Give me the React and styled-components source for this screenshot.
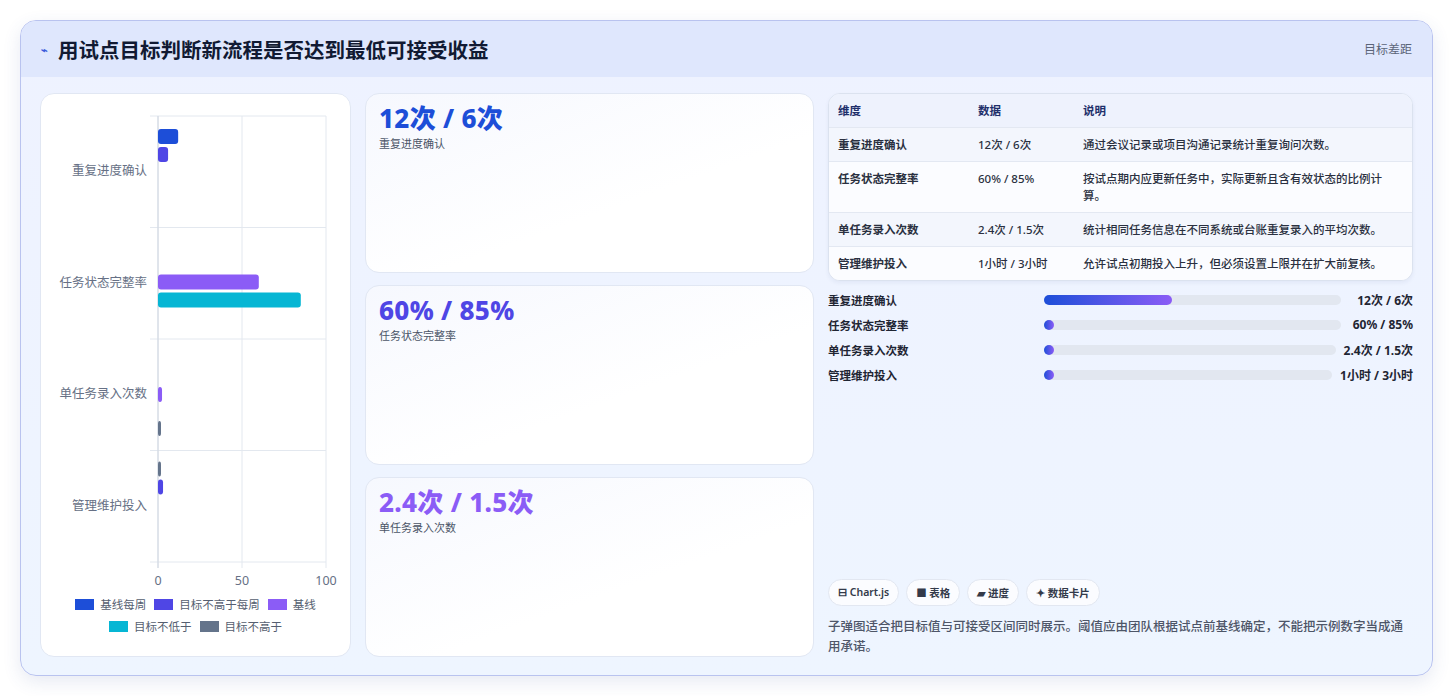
import styled, { createGlobalStyle } from "styled-components";

const Global = createGlobalStyle`
  body {
    margin: 0;
    background: #ffffff;
    font-family: "Noto Sans", "Noto Sans CJK SC", sans-serif;
  }
`;

const Page = styled.div`
  padding: 20px 20px 20px 20px;
  height: 696px;
  box-sizing: border-box;
`;

const Card = styled.div`
  height: 656px;
  box-sizing: border-box;
  border: 1px solid #b9c3ef;
  border-radius: 16px;
  background: linear-gradient(180deg, #eef2ff 0%, #eef5ff 100%);
  overflow: hidden;
  display: flex;
  flex-direction: column;
  box-shadow: 0 6px 18px rgba(60, 80, 160, 0.12);
`;

const Header = styled.div`
  height: 56px;
  flex: none;
  background: #dfe7fd;
  display: flex;
  align-items: center;
  justify-content: space-between;
  padding: 0 20px 0 20px;
`;

const Title = styled.h1`
  margin: 0;
  font-size: 20.5px;
  font-weight: 700;
  color: #111a33;
  display: flex;
  align-items: center;
  gap: 10px;
`;

const TitleIcon = styled.span`
  color: #3b5bdb;
  font-size: 11px;
`;

const HeaderTag = styled.span`
  font-size: 12px;
  color: #5b6478;
`;

const Body = styled.div`
  flex: 1;
  display: grid;
  grid-template-columns: 311px 449px 1fr;
  gap: 14px;
  padding: 16px 19px 18px 19px;
  min-height: 0;
`;

const Panel = styled.div`
  background: #ffffff;
  border: 1px solid #e1e7f3;
  border-radius: 14px;
`;

const ChartPanel = styled(Panel)`
  padding: 0;
  overflow: hidden;
`;

const Legend = styled.div`
  display: flex;
  flex-wrap: wrap;
  justify-content: center;
  gap: 6px 8px;
  padding: 0 20px;
  margin-top: 2px;
`;

const LegendItem = styled.span`
  display: flex;
  align-items: center;
  gap: 6px;
  font-size: 11.5px;
  color: #555e70;
`;

const Swatch = styled.span`
  width: 19px;
  height: 11px;
  background: ${(p) => p.$c};
`;

const Stats = styled.div`
  display: grid;
  grid-template-rows: 1fr 1fr 1fr;
  gap: 12px;
`;

const StatCard = styled(Panel)`
  background: linear-gradient(160deg, #f6f8fe 0%, #ffffff 60%);
  padding: 9px 13px;
`;

const StatValue = styled.div`
  font-size: 26px;
  font-weight: 800;
  color: ${(p) => p.$c};
  line-height: 1.2;
  letter-spacing: 0.3px;
`;

const StatLabel = styled.div`
  font-size: 11px;
  color: #4b5567;
  margin-top: 1px;
`;

const Right = styled.div`
  display: flex;
  flex-direction: column;
`;

const Table = styled.div`
  background: #fbfcff;
  border: 1px solid #dbe2ef;
  border-radius: 12px;
  overflow: hidden;
  box-shadow: 0 2px 4px rgba(30, 50, 120, 0.06);
`;

const Row = styled.div`
  display: grid;
  grid-template-columns: 140px 105px 1fr;
  padding: 8px 9px;
  font-size: 11.5px;
  line-height: 17px;
  color: ${(p) => (p.$head ? "#1e2f6b" : "#2a3040")};
  font-weight: ${(p) => (p.$head ? 700 : 500)};
  background: ${(p) => (p.$head ? "#eef2fd" : p.$alt ? "#f3f6fd" : "#fbfcff")};
  border-top: ${(p) => (p.$head ? "none" : "1px solid #e3e8f2")};
`;

const Cell = styled.span`
  font-weight: ${(p) => (p.$bold ? 600 : "inherit")};
  padding-right: 12px;
`;

const Bars = styled.div`
  display: flex;
  flex-direction: column;
  gap: 8px;
  margin-top: 10px;
`;

const BarRow = styled.div`
  display: flex;
  align-items: center;
  font-size: 11.5px;
  font-weight: 600;
  color: #1f2533;
  height: 17px;
`;

const BarLabel = styled.span`
  width: 216px;
  flex: none;
`;

const Track = styled.div`
  flex: 1;
  height: 10px;
  border-radius: 5px;
  background: #e2e7f0;
`;

const Fill = styled.div`
  height: 100%;
  min-width: 10px;
  border-radius: 5px;
  background: linear-gradient(90deg, #1d4ed8, #8b5cf6);
`;

const BarValue = styled.span`
  flex: none;
  margin-left: 8px;
  font-weight: 700;
  font-size: 12px;
  min-width: 64px;
  text-align: right;
`;

const Spacer = styled.div`
  flex: 1;
`;

const Chips = styled.div`
  display: flex;
  gap: 7px;
`;

const Chip = styled.span`
  font-size: 10.5px;
  font-weight: 600;
  color: #333a4a;
  background: #fbfcff;
  border: 1px solid #e2e7f1;
  border-radius: 14px;
  padding: 5px 9px;
`;

const Note = styled.p`
  margin: 11px 0 0;
  padding-right: 10px;
  font-size: 12.5px;
  line-height: 20px;
  color: #4e5668;
  font-weight: 500;
`;

const cats = ["重复进度确认", "任务状态完整率", "单任务录入次数", "管理维护投入"];
const bars = [
  [0, 13, 12, "#1d4ed8"],
  [0, 31, 6, "#4f46e5"],
  [1, 47, 60, "#8b5cf6"],
  [1, 65, 85, "#06b6d4"],
  [2, 48, 2.4, "#8b5cf6"],
  [2, 82, 1.5, "#64748b"],
  [3, 11, 1, "#64748b"],
  [3, 29, 3, "#4f46e5"],
];

function Chart() {
  const x0 = 117, w = 168, y0 = 22, band = 111.5;
  return (
    <svg width="311" height="500" style={{ display: "block" }}>
      {[0, 50, 100].map((v) => (
        <line key={v} x1={x0 + (v / 100) * w} x2={x0 + (v / 100) * w} y1={y0} y2={y0 + band * 4 + 6} stroke="#e3e8ef" />
      ))}
      {[0, 1, 2, 3, 4].map((i) => (
        <line key={i} x1={x0 - 8} x2={x0 + w} y1={y0 + band * i} y2={y0 + band * i} stroke="#e3e8ef" />
      ))}
      <line x1={x0} x2={x0} y1={y0} y2={y0 + band * 4 + 6} stroke="#cfd6e0" />
      {cats.map((c, i) => (
        <text key={c} x={x0 - 11} y={y0 + band * i + 59} textAnchor="end" fontSize="12.5" fill="#667085">{c}</text>
      ))}
      {bars.map(([c, off, v, col], i) => (
        <rect key={i} x={x0} y={y0 + band * c + off} width={Math.max((v / 100) * w, 3)} height="15" rx="3" fill={col} />
      ))}
      {[0, 50, 100].map((v) => (
        <text key={v} x={x0 + (v / 100) * w} y={y0 + band * 4 + 23} textAnchor="middle" fontSize="12.5" fill="#667085">{v}</text>
      ))}
    </svg>
  );
}

const legend = [
  ["基线每周", "#1d4ed8"],
  ["目标不高于每周", "#4f46e5"],
  ["基线", "#8b5cf6"],
  ["目标不低于", "#06b6d4"],
  ["目标不高于", "#64748b"],
];

const stats = [
  ["12次 / 6次", "重复进度确认", "#1d4ed8"],
  ["60% / 85%", "任务状态完整率", "#4f46e5"],
  ["2.4次 / 1.5次", "单任务录入次数", "#8b5cf6"],
];

const rows = [
  ["重复进度确认", "12次 / 6次", "通过会议记录或项目沟通记录统计重复询问次数。"],
  ["任务状态完整率", "60% / 85%", "按试点期内应更新任务中，实际更新且含有效状态的比例计算。"],
  ["单任务录入次数", "2.4次 / 1.5次", "统计相同任务信息在不同系统或台账重复录入的平均次数。"],
  ["管理维护投入", "1小时 / 3小时", "允许试点初期投入上升，但必须设置上限并在扩大前复核。"],
];

const progress = [
  ["重复进度确认", "12次 / 6次", 43],
  ["任务状态完整率", "60% / 85%", 0],
  ["单任务录入次数", "2.4次 / 1.5次", 0],
  ["管理维护投入", "1小时 / 3小时", 0],
];

export default function App() {
  return (
    <Page>
      <Global />
      <Card>
        <Header>
          <Title>
            <TitleIcon>⌁</TitleIcon>
            用试点目标判断新流程是否达到最低可接受收益
          </Title>
          <HeaderTag>目标差距</HeaderTag>
        </Header>
        <Body>
          <ChartPanel>
            <Chart />
            <Legend>
              {legend.map(([t, c]) => (
                <LegendItem key={t}>
                  <Swatch $c={c} />
                  {t}
                </LegendItem>
              ))}
            </Legend>
          </ChartPanel>
          <Stats>
            {stats.map(([v, l, c]) => (
              <StatCard key={l}>
                <StatValue $c={c}>{v}</StatValue>
                <StatLabel>{l}</StatLabel>
              </StatCard>
            ))}
          </Stats>
          <Right>
            <Table>
              <Row $head>
                <Cell>维度</Cell>
                <Cell>数据</Cell>
                <Cell>说明</Cell>
              </Row>
              {rows.map((r, i) => (
                <Row key={r[0]} $alt={i % 2 === 0}>
                  <Cell $bold>{r[0]}</Cell>
                  <Cell>{r[1]}</Cell>
                  <Cell>{r[2]}</Cell>
                </Row>
              ))}
            </Table>
            <Bars>
              {progress.map(([l, v, p]) => (
                <BarRow key={l}>
                  <BarLabel>{l}</BarLabel>
                  <Track>
                    <Fill style={{ width: `${p}%` }} />
                  </Track>
                  <BarValue>{v}</BarValue>
                </BarRow>
              ))}
            </Bars>
            <Spacer />
            <Chips>
              <Chip>⊟ Chart.js</Chip>
              <Chip>■ 表格</Chip>
              <Chip>▰ 进度</Chip>
              <Chip>✦ 数据卡片</Chip>
            </Chips>
            <Note>子弹图适合把目标值与可接受区间同时展示。阈值应由团队根据试点前基线确定，不能把示例数字当成通用承诺。</Note>
          </Right>
        </Body>
      </Card>
    </Page>
  );
}
